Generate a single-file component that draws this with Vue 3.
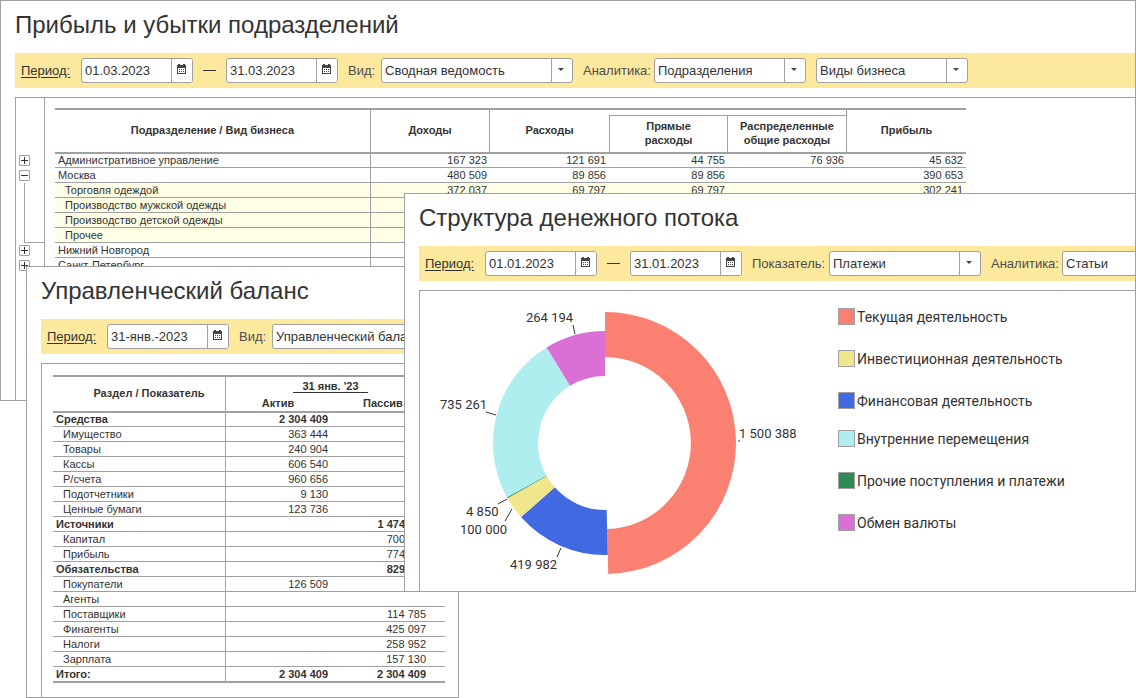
<script setup>
import { ref } from 'vue'

const profitFrom = ref('01.03.2023')
const profitTo = ref('31.03.2023')
const balanceDate = ref('31-янв.-2023')
const flowFrom = ref('01.01.2023')
const flowTo = ref('31.01.2023')

const profitRows = [
  { name: 'Административное управление', values: ['167 323', '121 691', '44 755', '76 936', '45 632'], node: 'plus' },
  { name: 'Москва', values: ['480 509', '89 856', '89 856', '', '390 653'], node: 'minus' },
  { name: 'Торговля одеждой', values: ['372 037', '69 797', '69 797', '', '302 241'], child: true, node: 'line' },
  { name: 'Производство мужской одежды', values: ['', '', '', '', ''], child: true, node: 'line' },
  { name: 'Производство детской одежды', values: ['', '', '', '', ''], child: true, node: 'line' },
  { name: 'Прочее', values: ['', '', '', '', ''], child: true, node: 'end' },
  { name: 'Нижний Новгород', values: ['', '', '', '', ''], node: 'plus' },
  { name: 'Санкт-Петербург', values: ['', '', '', '', ''], node: 'plus' },
]

const balanceRows = [
  { name: 'Средства', active: '2 304 409', passive: '', total: true },
  { name: 'Имущество', active: '363 444', passive: '' },
  { name: 'Товары', active: '240 904', passive: '' },
  { name: 'Кассы', active: '606 540', passive: '' },
  { name: 'Р/счета', active: '960 656', passive: '' },
  { name: 'Подотчетники', active: '9 130', passive: '' },
  { name: 'Ценные бумаги', active: '123 736', passive: '' },
  { name: 'Источники', active: '', passive: '1 474', total: true, cut: true },
  { name: 'Капитал', active: '', passive: '700', cut: true },
  { name: 'Прибыль', active: '', passive: '774', cut: true },
  { name: 'Обязательства', active: '', passive: '829', total: true, cut: true },
  { name: 'Покупатели', active: '126 509', passive: '' },
  { name: 'Агенты', active: '', passive: '' },
  { name: 'Поставщики', active: '', passive: '114 785' },
  { name: 'Финагенты', active: '', passive: '425 097' },
  { name: 'Налоги', active: '', passive: '258 952' },
  { name: 'Зарплата', active: '', passive: '157 130' },
  { name: 'Итого:', active: '2 304 409', passive: '2 304 409', total: true },
]

const slices = [
  { value: 1500388, color: '#fa8072', outer: 131, inner: 86 },
  { value: 419982, color: '#4169e1', outer: 112, inner: 67 },
  { value: 100000, color: '#f0e68c', outer: 112, inner: 67 },
  { value: 4850, color: '#2e8b57', outer: 112, inner: 67 },
  { value: 735261, color: '#afeeee', outer: 112, inner: 67 },
  { value: 264194, color: '#da70d6', outer: 112, inner: 67 },
]
const cx = 185
const cy = 152
const sum = slices.reduce((s, p) => s + p.value, 0)
const point = (r, a) => `${(cx + r * Math.sin(a)).toFixed(2)} ${(cy - r * Math.cos(a)).toFixed(2)}`
let angle = 0
const arcs = slices.map(({ value, color, outer, inner }) => {
  const a = angle
  const b = angle + (value / sum) * 2 * Math.PI
  angle = b
  const d = `M${point(outer, a)}A${outer} ${outer} 0 0 1 ${point(outer, b)}L${point(inner, b)}A${inner} ${inner} 0 0 0 ${point(inner, a)}Z`
  return { color, d }
})

const marks = [
  { text: '264 194', x: 106, y: 31, line: [153, 34, 155, 43] },
  { text: '735 261', x: 20, y: 118, line: [66, 121, 76, 124] },
  { text: '4 850', x: 46, y: 225, line: [78, 213, 87, 208] },
  { text: '100 000', x: 40, y: 243, line: [85, 230, 92, 218] },
  { text: '419 982', x: 90, y: 278, line: [137, 266, 141, 257] },
  { text: '1 500 388', x: 319, y: 147, line: [318, 150, 320, 150] },
]

const legend = [
  [
    { text: 'Текущая деятельность', kind: 'salmon' },
    { text: 'Инвестиционная деятельность', kind: 'khaki' },
    { text: 'Финансовая деятельность', kind: 'blue' },
  ],
  [
    { text: 'Внутренние перемещения', kind: 'cyan' },
    { text: 'Прочие поступления и платежи', kind: 'green' },
    { text: 'Обмен валюты', kind: 'orchid' },
  ],
]
</script>

<template>
  <main class="desk">
    <svg class="defs" aria-hidden="true">
      <symbol id="calendar" viewBox="0 0 9 10">
        <path d="M0 1h1V0h2v1h3V0h2v1h1v9H0zM1 4v5h7V4z" fill="#444" fill-rule="evenodd" />
        <path d="M2 5h1v1H2zM4 5h1v1H4zM6 5h1v1H6zM2 7h1v1H2zM4 7h1v1H4zM6 7h1v1H6z" fill="#444" />
      </symbol>
    </svg>

    <section class="window profit">
      <h1>Прибыль и убытки подразделений</h1>
      <form class="bar" @submit.prevent>
        <a class="period" href="#profit-period">Период:</a>
        <div class="field date">
          <input v-model="profitFrom" type="text" aria-label="Начало периода" />
          <button type="button" aria-label="Календарь"><svg class="cal"><use href="#calendar" /></svg></button>
        </div>
        <span class="dash"></span>
        <div class="field date">
          <input v-model="profitTo" type="text" aria-label="Конец периода" />
          <button type="button" aria-label="Календарь"><svg class="cal"><use href="#calendar" /></svg></button>
        </div>
        <label class="kind" for="profit-kind">Вид:</label>
        <div class="field pick wide"><select id="profit-kind"><option>Сводная ведомость</option></select></div>
        <label class="group" for="profit-group">Аналитика:</label>
        <div class="field pick"><select id="profit-group"><option>Подразделения</option></select></div>
        <div class="field pick second"><select aria-label="Вторая аналитика"><option>Виды бизнеса</option></select></div>
      </form>
      <div class="panel sheet">
        <div class="tree">
          <div v-for="row in profitRows" :key="row.name" class="node" :class="row.node">
            <button v-if="row.node === 'plus' || row.node === 'minus'" type="button" :aria-label="row.name"></button>
          </div>
        </div>
        <div class="scroll">
          <table class="profit-table">
            <colgroup><col class="name" /><col v-for="n in 5" :key="n" /></colgroup>
            <thead>
              <tr class="gap">
                <th rowspan="2" class="split">Подразделение / Вид бизнеса</th>
                <th rowspan="2" class="split">Доходы</th>
                <th rowspan="2">Расходы</th>
                <th colspan="2" class="roof"></th>
                <th rowspan="2">Прибыль</th>
              </tr>
              <tr class="subs">
                <th class="sub first">Прямые<br />расходы</th>
                <th class="sub">Распределенные<br />общие расходы</th>
              </tr>
            </thead>
            <tbody>
              <tr v-for="row in profitRows" :key="row.name" :class="{ child: row.child }">
                <td class="split">{{ row.name }}</td>
                <td v-for="(v, i) in row.values" :key="i" class="num">{{ v }}</td>
              </tr>
            </tbody>
          </table>
        </div>
      </div>
    </section>

    <section class="window balance">
      <h1>Управленческий баланс</h1>
      <form class="bar" @submit.prevent>
        <a class="period" href="#balance-period">Период:</a>
        <div class="field date long">
          <input v-model="balanceDate" type="text" aria-label="Дата баланса" />
          <button type="button" aria-label="Календарь"><svg class="cal"><use href="#calendar" /></svg></button>
        </div>
        <label class="kind" for="balance-kind">Вид:</label>
        <div class="field pick wide"><select id="balance-kind"><option>Управленческий баланс</option></select></div>
      </form>
      <div class="panel">
        <table class="balance-table">
          <colgroup><col class="name" /><col class="active" /><col /></colgroup>
          <thead>
            <tr class="day">
              <th rowspan="2" class="split">Раздел / Показатель</th>
              <th colspan="2" class="date-head"><span>31 янв. '23</span></th>
            </tr>
            <tr class="sides">
              <th class="side">Актив</th>
              <th class="side last">Пассив</th>
            </tr>
          </thead>
          <tbody>
            <tr v-for="row in balanceRows" :key="row.name" :class="{ total: row.total, child: !row.total }">
              <td class="split">{{ row.name }}</td>
              <td class="num">{{ row.active }}</td>
              <td class="num passive" :class="{ cut: row.cut }">{{ row.passive }}</td>
            </tr>
          </tbody>
        </table>
      </div>
    </section>

    <section class="window flow">
      <h1>Структура денежного потока</h1>
      <form class="bar" @submit.prevent>
        <a class="period" href="#flow-period">Период:</a>
        <div class="field date">
          <input v-model="flowFrom" type="text" aria-label="Начало периода" />
          <button type="button" aria-label="Календарь"><svg class="cal"><use href="#calendar" /></svg></button>
        </div>
        <span class="dash"></span>
        <div class="field date">
          <input v-model="flowTo" type="text" aria-label="Конец периода" />
          <button type="button" aria-label="Календарь"><svg class="cal"><use href="#calendar" /></svg></button>
        </div>
        <label class="measure" for="flow-kind">Показатель:</label>
        <div class="field pick"><select id="flow-kind"><option>Платежи</option></select></div>
        <label class="group" for="flow-group">Аналитика:</label>
        <div class="field pick"><select id="flow-group"><option>Статьи</option></select></div>
      </form>
      <div class="panel chart">
        <svg class="donut" viewBox="0 0 400 300" role="img" aria-label="Структура денежного потока">
          <path v-for="arc in arcs" :key="arc.color" :d="arc.d" :fill="arc.color" />
          <g v-for="m in marks" :key="m.text">
            <line :x1="m.line[0]" :y1="m.line[1]" :x2="m.line[2]" :y2="m.line[3]" stroke="#333" />
            <text :x="m.x" :y="m.y">{{ m.text }}</text>
          </g>
        </svg>
        <div class="legend">
          <ul v-for="(group, g) in legend" :key="g">
            <li v-for="item in group" :key="item.text"><i :class="item.kind"></i>{{ item.text }}</li>
          </ul>
        </div>
      </div>
    </section>
  </main>
</template>

<style>
body { background: #fff; }
</style>

<style scoped>
.desk {
  position: relative;
  min-height: 698px;
  overflow: hidden;
  font-family: "Liberation Sans", Arial, sans-serif;
  font-size: 13px;
  color: #333;
}
.desk * { box-sizing: border-box; }
.defs { position: absolute; width: 0; height: 0; }

.window {
  position: absolute;
  display: flex;
  flex-direction: column;
  border: 1px solid #a0a0a0;
  background: #fff;
  padding-left: 14px;
  overflow: hidden;
}
.profit { left: 0; right: 0; top: 0; min-height: 401px; }
.balance { left: 26px; top: 266px; width: 433px; min-height: 432px; }
.flow { left: 404px; right: 0; top: 193px; min-height: 399px; }

h1 {
  margin: 0;
  height: 52px;
  line-height: 48px;
  font-size: 24px;
  font-weight: 400;
  white-space: nowrap;
}

.bar {
  display: flex;
  align-items: center;
  height: 35px;
  padding-left: 6px;
  background: #fce99e;
  overflow: hidden;
  white-space: nowrap;
}
.bar > * { flex: none; }
.period { width: 49px; margin-right: 11px; color: #333; text-underline-offset: 2px; }
.dash { width: 13px; height: 1px; margin: 0 10px; background: #333; }
label { margin-left: 10px; color: #4d4d4d; }
.kind { width: 33px; }
.group { width: 71px; }
.measure { width: 77px; }

.field {
  position: relative;
  display: flex;
  width: 152px;
  height: 25px;
  border: 1px solid #a0a0a0;
  border-radius: 3px;
  background: #fff;
  overflow: hidden;
}
.field.date { width: 112px; }
.field.date.long { width: 122px; }
.field.wide { width: 192px; }
.second { margin-left: 10px; }
.field input, .field select {
  flex: 1;
  min-width: 0;
  padding: 0 3px;
  border: 0;
  outline: 0;
  background: transparent;
  color: #333;
  font: inherit;
  appearance: none;
}
.field button {
  display: flex;
  align-items: flex-start;
  width: 21px;
  padding: 5px 0 0 5px;
  border: 0;
  border-left: 1px solid #a0a0a0;
  background: #fff;
}
.cal { flex: none; width: 9px; height: 10px; }
.pick::before {
  content: "";
  position: absolute;
  right: 20px;
  top: 0;
  bottom: 0;
  width: 1px;
  background: #a0a0a0;
}
.pick::after {
  content: "";
  position: absolute;
  right: 8px;
  top: 9px;
  border: 3px solid transparent;
  border-top-color: #444;
  border-bottom: 0;
}

.panel {
  flex: 1;
  margin-top: 9px;
  border: solid #a0a0a0;
  border-width: 1px 0 0 1px;
}
.sheet { display: flex; }
.tree {
  width: 29px;
  padding: 55px 0 0 3px;
  border-right: 1px solid #a0a0a0;
}
.node { height: 15px; padding-top: 2px; }
.node button {
  display: block;
  width: 11px;
  height: 11px;
  padding: 0;
  border: 1px solid #a0a0a0;
  border-radius: 1px;
  background: linear-gradient(#333, #333) center / 7px 1px no-repeat;
}
.plus button {
  background: linear-gradient(#333, #333) center / 7px 1px no-repeat, linear-gradient(#333, #333) center / 1px 7px no-repeat;
}
.line, .end { margin-left: 5px; border-left: 1px solid #a0a0a0; }
.end { border-bottom: 1px solid #a0a0a0; }

table {
  border-collapse: separate;
  border-spacing: 0;
  table-layout: fixed;
  border-top: 2px solid #a0a0a0;
  font-size: 11px;
}
th, td { padding: 0; border: 0 solid #a0a0a0; white-space: nowrap; overflow: hidden; }
th { padding-bottom: 2px; border-bottom-width: 1px; line-height: 14px; }
td { height: 15px; padding-left: 3px; border-bottom-width: 1px; line-height: 13px; }
tbody tr:first-child td { border-top-width: 1px; }
.split { border-right-width: 1px; }
.child td:first-child { padding-left: 10px; }
.num { text-align: right; }

.scroll { padding: 10px 0 0 10px; }
.profit-table { width: 911px; }
.profit-table .name { width: 316px; }
.profit-table .num { padding-right: 3px; }
.profit-table .child td { background: #ffffe6; }
.gap { height: 5px; }
.subs { height: 38px; }
.roof { padding: 0; border-right-width: 1px; border-bottom-width: 0; }
.sub { border-top-width: 1px; border-right-width: 1px; }
.sub.first { border-left-width: 1px; }

.balance-table { width: 392px; margin: 11px 0 0 11px; }
.balance-table .name { width: 173px; }
.balance-table .active { width: 104px; }
.balance-table .num { padding-right: 2px; }
.balance-table .num.passive { padding-right: 19px; }
.balance-table .num.passive.cut { padding-right: 40px; }
.balance-table th.split { padding-left: 20px; }
.day { height: 18px; }
.sides { height: 17px; }
.date-head { padding: 0 10px 1px 0; border-bottom-width: 0; }
.date-head span { display: inline-block; padding: 0 9px; border-bottom: 1px solid #333; line-height: 11px; }
.side { padding-bottom: 0; }
.side.last { padding-right: 9px; }
.total td { font-weight: 700; }
.balance-table tbody tr:last-child td { height: 16px; border-bottom-width: 2px; }

.chart { display: flex; align-items: flex-start; }
.donut { flex: none; width: 400px; height: 300px; font-family: Roboto, sans-serif; font-size: 13px; fill: #333; }
.legend {
  display: flex;
  flex-direction: column;
  gap: 21px;
  padding: 17px 0 0 18px;
  font-family: Roboto, sans-serif;
  font-size: 14px;
}
.legend ul { display: flex; flex-direction: column; gap: 25px; margin: 0; padding: 0; list-style: none; }
.legend li { display: flex; align-items: center; gap: 2px; height: 17px; line-height: 16px; white-space: nowrap; }
.legend i { width: 17px; height: 17px; border: 1px solid #a0a0a0; }
.salmon { background: #fa8072; }
.khaki { background: #f0e68c; }
.blue { background: #4169e1; }
.cyan { background: #afeeee; }
.green { background: #2e8b57; }
.orchid { background: #da70d6; }
</style>
